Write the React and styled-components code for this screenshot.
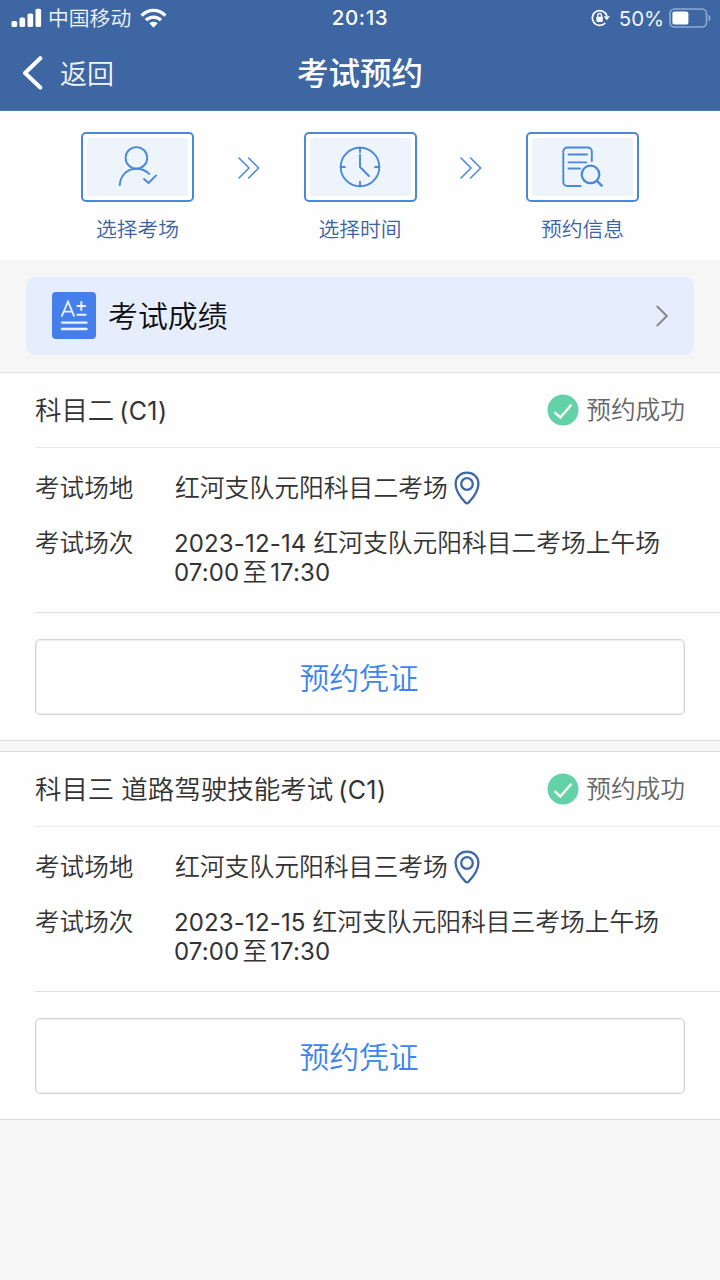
import React from "react";
import styled, { createGlobalStyle } from "styled-components";

const Global = createGlobalStyle`
  *, *::before, *::after { box-sizing: border-box; }
  body {
    margin: 0;
    background: #f6f6f6;
    font-family: Inter, "Noto Sans CJK SC", sans-serif;
    font-weight: 350;
    color: #333;
  }
  button { font-family: inherit; font-weight: inherit; padding: 0; border: 0; background: none; }
  svg { display: block; flex: none; }
`;

const Screen = styled.main`
  width: 720px;
  height: 1280px;
  overflow: hidden;
  display: flex;
  flex-direction: column;
`;

const Run = styled.span`
  font-size: ${(p) => p.$size}px;
  letter-spacing: ${(p) => p.$track || 0}px;
  margin-left: ${(p) => p.$before || 0}px;
  font-weight: ${(p) => (p.$latin ? 400 : "inherit")};
`;

const Header = styled.header`
  height: 111px;
  background: #3e66a2;
  color: #fff;
  border-bottom: 1px solid #4f7ab8;
`;

const StatusBar = styled.div`
  height: 36px;
  padding: 0 9px 0 11px;
  display: grid;
  grid-template-columns: 1fr auto 1fr;
  align-items: center;
`;

const StatusGroup = styled.div`
  display: flex;
  align-items: center;
  justify-content: ${(p) => (p.$end ? "flex-end" : "flex-start")};
  height: 34px;
  line-height: 30px;
  color: #f1f6fe;
`;

const Carrier = styled.span`
  font-size: 20.8px;
  margin: 0 9px 0 6px;
  padding-top: 2px;
`;

const Clock = styled.time`
  font-size: 20.5px;
  font-weight: 500;
  letter-spacing: 0.65px;
  line-height: 36px;
  margin-right: 2px;
`;

const Percent = styled.span`
  font-size: 20.5px;
  font-weight: 400;
  letter-spacing: -0.1px;
  margin: 1px 5px 0 9px;
`;

const NavBar = styled.nav`
  height: 74px;
  padding: 0 22px;
  display: grid;
  grid-template-columns: 1fr auto 1fr;
  align-items: center;
`;

const BackButton = styled.button`
  display: flex;
  align-items: center;
  gap: 16px;
  color: #f1f6fe;
  font-size: 27px;
  line-height: 40px;
`;

const BackText = styled.span`
  padding-top: 3px;
`;

const Title = styled.h1`
  margin: 0;
  padding-top: 1px;
  font-size: 31.5px;
  font-weight: 500;
  line-height: 46px;
`;

const Steps = styled.section`
  height: 149px;
  padding: 21px 81px 0;
  display: flex;
  justify-content: space-between;
  background: #fefefe;
`;

const Step = styled.div`
  width: 113px;
  display: flex;
  flex-direction: column;
  align-items: center;
`;

const StepFrame = styled.div`
  width: 113px;
  height: 70px;
  padding: 4px;
  border: 2px solid #4a88dc;
  border-radius: 5px;
  background: #fff;
`;

const StepFill = styled.div`
  height: 100%;
  border-radius: 3px;
  background: #edf4fb;
  display: flex;
  align-items: center;
  justify-content: center;
`;

const StepLabel = styled.span`
  margin-top: 13px;
  font-size: 20.8px;
  line-height: 30px;
  white-space: nowrap;
  color: #3c62a2;
`;

const StepArrow = styled.div`
  height: 71px;
  display: flex;
  align-items: center;
`;

const ScoreArea = styled.section`
  height: 111px;
  padding: 17px 26px 0;
`;

const ScoreLink = styled.button`
  width: 100%;
  height: 78px;
  padding: 0 26px;
  border-radius: 9px;
  background: #e6eefd;
  display: flex;
  align-items: center;
  color: #0c0d10;
`;

const ScoreText = styled.span`
  flex: 1;
  margin: 0 0 1px 12px;
  text-align: left;
  font-size: 29.9px;
  line-height: 44px;
`;

const Card = styled.article`
  height: 369px;
  padding-left: 35px;
  margin-top: ${(p) => (p.$first ? 1 : 10)}px;
  border-top: 1px solid #dcdcdc;
  border-bottom: 1px solid #dcdcdc;
  background: #fefefe;
`;

const CardHead = styled.div`
  height: 75px;
  padding-right: 35px;
  border-bottom: 1px solid #e8e8e8;
  display: flex;
  align-items: center;
  justify-content: space-between;
  line-height: 36px;
`;

const Subject = styled.div`
  padding-top: 3px;
  white-space: nowrap;
`;

const Result = styled.div`
  display: flex;
  align-items: center;
  gap: 7px;
  margin-top: -1px;
  color: #666;
  font-size: 24.7px;
`;

const ResultText = styled.span`
  line-height: 36px;
`;

const Details = styled.div`
  height: 165px;
  padding-top: 23px;
  border-bottom: 1px solid #dedede;
  display: flex;
  flex-direction: column;
  gap: 20px;
`;

const Row = styled.div`
  display: grid;
  grid-template-columns: 140px 1fr;
  line-height: 35px;
`;

const Label = styled.span`
  font-size: 24.6px;
`;

const Value = styled.div`
  height: 35px;
  display: flex;
  align-items: center;
  gap: 6px;
  font-size: 24.8px;
  white-space: nowrap;
`;

const PinSlot = styled.span`
  margin-top: -1px;
`;

const Session = styled.div`
  display: flex;
  flex-direction: column;
  margin-left: -1px;
`;

const SessionLine = styled.div`
  height: 29px;
  display: flex;
  align-items: baseline;
  white-space: nowrap;
`;

const VoucherButton = styled.button`
  width: 650px;
  height: 76px;
  margin-top: 26px;
  padding: 1px 2px 0 0;
  border: 1px solid #d4d4d4;
  border-radius: 5px;
  box-shadow: inset 0 0 0 1px #efefef;
  color: #3d84ec;
  font-size: 29.8px;
  line-height: 44px;
`;

const SignalIcon = () => (
  <svg width="31" height="20" viewBox="0 0 31 20" fill="#fff">
    <rect x="0.5" y="13" width="5.6" height="6" rx="1.6" />
    <rect x="8.5" y="9.5" width="5.6" height="9.5" rx="1.6" />
    <rect x="16.5" y="5.5" width="5.6" height="13.5" rx="1.6" />
    <rect x="24.5" y="0.7" width="5.6" height="18.3" rx="1.6" />
  </svg>
);

const WifiIcon = () => (
  <svg width="27" height="21" viewBox="0 0 27 21" fill="none" stroke="#fff" strokeWidth="3.3">
    <path d="M1.6 7.6C8.2 .6 18.8 .6 25.4 7.6" />
    <path d="M6 12.2C10.1 8.1 16.9 8.1 21 12.2" />
    <path d="M9.3 15.3c2.3-2 6.1-2 8.4 0l-4.2 4.4z" fill="#fff" stroke="none" />
  </svg>
);

const LockRotationIcon = () => (
  <svg width="19" height="18" viewBox="0 0 19 18" fill="none" stroke="#fff" strokeWidth="1.7">
    <path d="M15.9 7A7.4 7.4 0 1 0 14.2 14" />
    <path d="M12.7 7.2h6.1l-3 4z" fill="#fff" stroke="none" />
    <rect x="5.4" y="7.7" width="6.4" height="5.2" rx="0.8" fill="#fff" stroke="none" />
    <path d="M6.7 8V6.4a1.9 1.9 0 0 1 3.8 0V8" strokeWidth="1.3" />
  </svg>
);

const BatteryIcon = () => (
  <svg width="42" height="20" viewBox="0 0 42 20">
    <rect x="1" y="1" width="36.5" height="18" rx="4.5" fill="none" stroke="#8fabd7" strokeWidth="1.6" />
    <path d="M39.5 6.7c2.7 1.2 2.7 5.4 0 6.6z" fill="#8fabd7" />
    <rect x="3.4" y="3.4" width="16" height="13.2" rx="2.2" fill="#fff" />
  </svg>
);

const BackIcon = () => (
  <svg width="22" height="34" viewBox="0 0 22 34" fill="none" stroke="#fff" strokeWidth="4" strokeLinecap="round" strokeLinejoin="round">
    <path d="M18.3 2.2L3 17l15.3 14.5" />
  </svg>
);

const StepSvg = ({ children }) => (
  <svg width="44" height="44" viewBox="0 0 44 44" fill="none" stroke="#4a88dc" strokeWidth="1.9" strokeLinecap="round" strokeLinejoin="round">
    {children}
  </svg>
);

const PersonIcon = () => (
  <StepSvg>
    <circle cx="20.4" cy="12.9" r="10.8" />
    <path d="M3.8 40.2C4 30.5 11.2 23.7 20.3 23.7c5 0 9.6 1.8 12.9 5.2" />
    <path d="M28 34l4.6 4 7.5-7.6" />
  </StepSvg>
);

const ClockIcon = () => (
  <StepSvg>
    <circle cx="22" cy="22" r="19.3" />
    <path d="M22 2.7v4.6M22 36.7v4.6M2.7 22h4.1M37.2 22h4.1M22 10v12l9 9" />
  </StepSvg>
);

const DocumentIcon = () => (
  <StepSvg>
    <path d="M30.8 16V6.5a4 4 0 0 0-4-4H6.3a4 4 0 0 0-4 4V37a4 4 0 0 0 4 4h13.4" />
    <path d="M7.5 9.5h18.5M7.5 17.4h17.8M7.5 23.5h11.5" />
    <circle cx="29.5" cy="29.4" r="8.8" strokeWidth="2.2" />
    <path d="M35.9 35.9l4.8 4.8" strokeWidth="2.4" />
  </StepSvg>
);

const DoubleChevron = () => (
  <svg width="22" height="22" viewBox="0 0 22 22" fill="none" stroke="#4a88dc" strokeWidth="1.5" strokeLinecap="round">
    <path d="M1 1l10 10L1 21M10.6 1l10 10-10 10" />
  </svg>
);

const ScoreIcon = () => (
  <svg width="44" height="48" viewBox="0 0 44 48">
    <rect width="44" height="47" rx="4" fill="#447feb" />
    <g fill="none" stroke="#eaf2ff" strokeWidth="2">
      <path d="M9.6 24.6L16 9.6l6.3 15M11.9 19.7h8.2" strokeWidth="1.8" />
      <path d="M24.5 14h9.5M29.3 9.3v9.4M24.5 22.8h10" />
      <path d="M10 30.6h24.5M10 37h24.5" strokeWidth="2.4" strokeLinecap="round" />
    </g>
  </svg>
);

const ForwardIcon = () => (
  <svg width="12" height="22" viewBox="0 0 12 22" fill="none" stroke="#85888f" strokeWidth="1.9">
    <path d="M.8 1l10 10-10 10" />
  </svg>
);

const SuccessIcon = () => (
  <svg width="32" height="32" viewBox="0 0 32 32">
    <circle cx="16" cy="16" r="15.5" fill="#64d2a9" />
    <path d="M7.5 18.2l5.8 5.3L24.4 10.7" fill="none" stroke="#fff" strokeWidth="2.4" />
  </svg>
);

const PinIcon = () => (
  <svg width="26" height="34" viewBox="0 0 26 34" fill="none" stroke="#3f68a8" strokeWidth="2.3">
    <path d="M13 1.6C6.4 1.6 1.6 6.3 1.6 12.7c0 7.4 5.4 14.3 9.9 18.9q1.5 1.4 3 0c4.5-4.6 9.9-11.5 9.9-18.9C24.4 6.3 19.6 1.6 13 1.6z" />
    <circle cx="13" cy="13" r="5.8" />
  </svg>
);

const steps = [
  { label: "选择考场", Icon: PersonIcon },
  { label: "选择时间", Icon: ClockIcon },
  { label: "预约信息", Icon: DocumentIcon },
];

const bookings = [
  { subject: "科目二", venue: "红河支队元阳科目二考场", date: "2023-12-14" },
  { subject: "科目三", skill: "道路驾驶技能考试", venue: "红河支队元阳科目三考场", date: "2023-12-15" },
];

function BookingCard({ subject, skill, venue, date, first }) {
  return (
    <Card $first={first}>
      <CardHead>
        <Subject>
          <Run $size={26.4}>{subject}</Run>
          {skill && <Run $size={26.5} $before={7}>{skill}</Run>}
          <Run $latin $size={25} $before={5} $track={0.4}>(C1)</Run>
        </Subject>
        <Result>
          <SuccessIcon />
          <ResultText>预约成功</ResultText>
        </Result>
      </CardHead>
      <Details>
        <Row>
          <Label>考试场地</Label>
          <Value>
            {venue}
            <PinSlot>
              <PinIcon />
            </PinSlot>
          </Value>
        </Row>
        <Row>
          <Label>考试场次</Label>
          <Session>
            <SessionLine>
              <Run $latin $size={24} $track={0.15}>{date}</Run>
              <Run $size={24.75} $before={7}>{venue}上午场</Run>
            </SessionLine>
            <SessionLine>
              <Run $latin $size={24} $track={0.15}>07:00</Run>
              <Run $size={24.8} $before={3}>至</Run>
              <Run $latin $size={24} $track={0.15} $before={3}>17:30</Run>
            </SessionLine>
          </Session>
        </Row>
      </Details>
      <VoucherButton>预约凭证</VoucherButton>
    </Card>
  );
}

export default function App() {
  return (
    <Screen>
      <Global />
      <Header>
        <StatusBar>
          <StatusGroup>
            <SignalIcon />
            <Carrier>中国移动</Carrier>
            <WifiIcon />
          </StatusGroup>
          <Clock>20:13</Clock>
          <StatusGroup $end>
            <LockRotationIcon />
            <Percent>50%</Percent>
            <BatteryIcon />
          </StatusGroup>
        </StatusBar>
        <NavBar>
          <BackButton>
            <BackIcon />
            <BackText>返回</BackText>
          </BackButton>
          <Title>考试预约</Title>
        </NavBar>
      </Header>
      <Steps>
        {steps.map(({ label, Icon }, i) => (
          <React.Fragment key={label}>
            {i > 0 && (
              <StepArrow>
                <DoubleChevron />
              </StepArrow>
            )}
            <Step>
              <StepFrame>
                <StepFill>
                  <Icon />
                </StepFill>
              </StepFrame>
              <StepLabel>{label}</StepLabel>
            </Step>
          </React.Fragment>
        ))}
      </Steps>
      <ScoreArea>
        <ScoreLink>
          <ScoreIcon />
          <ScoreText>考试成绩</ScoreText>
          <ForwardIcon />
        </ScoreLink>
      </ScoreArea>
      {bookings.map((b, i) => (
        <BookingCard key={b.date} first={i === 0} {...b} />
      ))}
    </Screen>
  );
}
